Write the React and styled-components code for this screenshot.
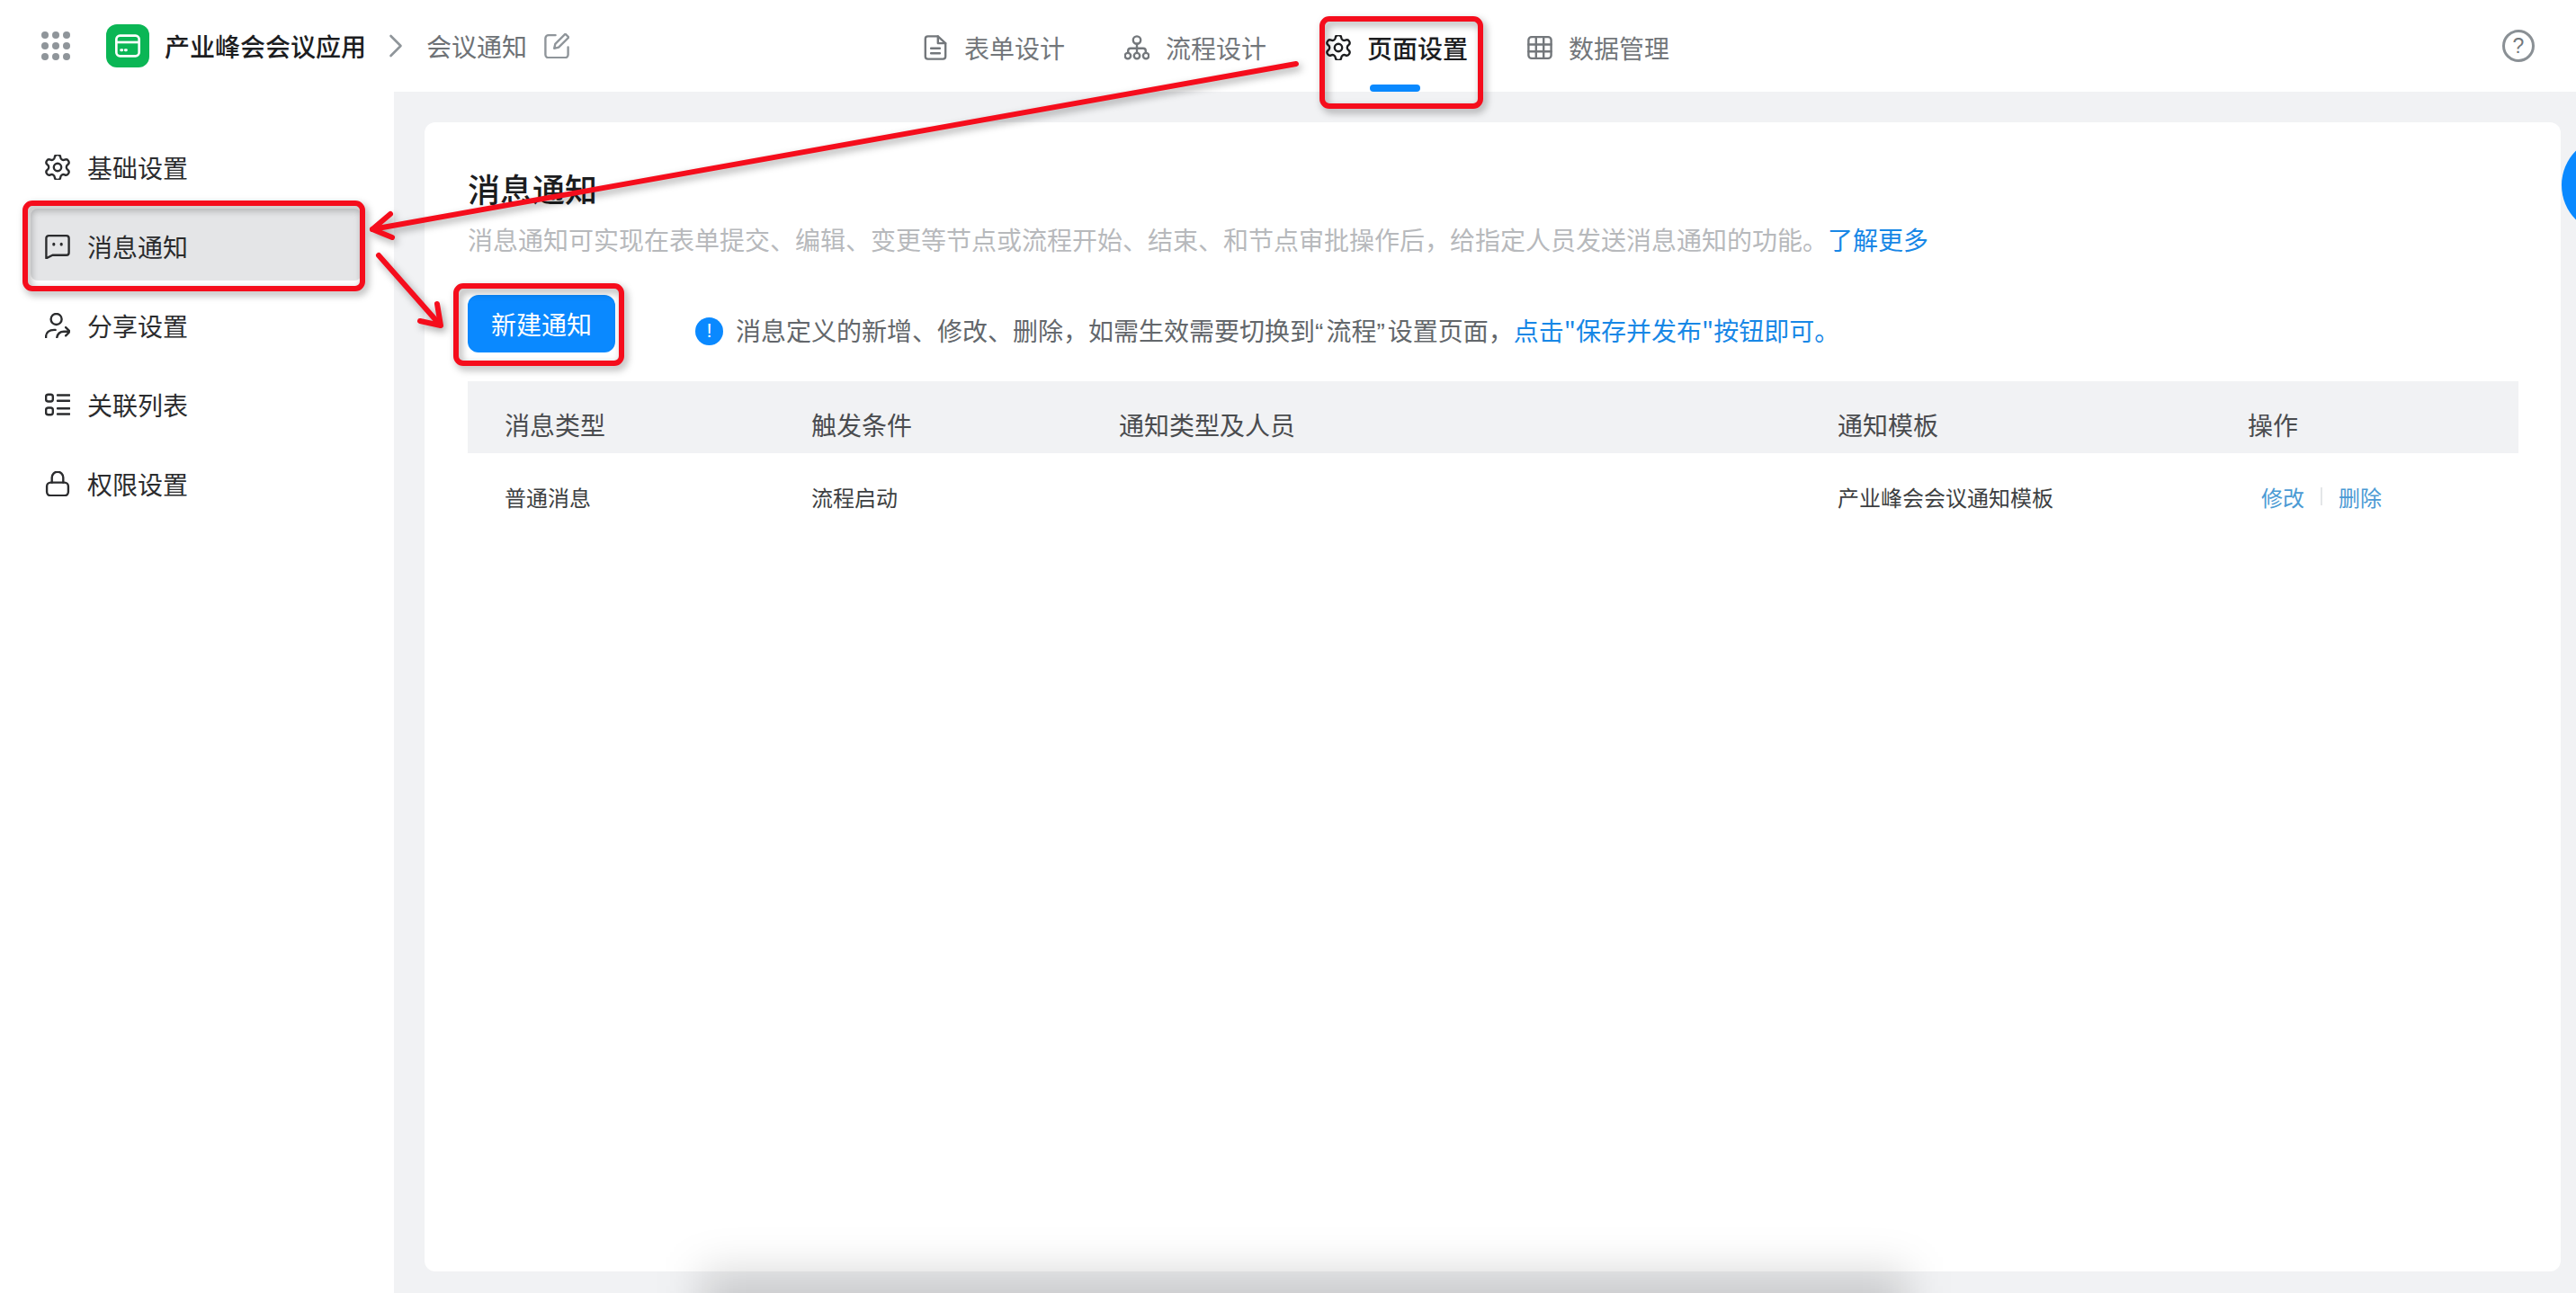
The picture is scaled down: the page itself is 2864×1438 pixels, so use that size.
import React from 'react';
import styled, {createGlobalStyle} from 'styled-components';

const GlobalStyle = createGlobalStyle`
  html, body {
    margin: 0;
    padding: 0;
    background: #fff;
    font-family: "Noto Sans CJK SC", "Noto Sans", sans-serif;
  }
`;

const COMMA = '\uFF0C';

const Icon = ({size = 28, color = 'currentColor', width = 1.7, children}) => (
  <svg width={size} height={size} viewBox="2 2 20 20" fill="none" stroke={color} strokeWidth={width} strokeLinecap="round" strokeLinejoin="round">
    {children}
  </svg>
);

const Gear = () => (
  <Icon>
    <path d="M9.671 4.136a2.34 2.34 0 0 1 4.659 0 2.34 2.34 0 0 0 3.319 1.915 2.34 2.34 0 0 1 2.33 4.033 2.34 2.34 0 0 0 0 3.831 2.34 2.34 0 0 1-2.33 4.033 2.34 2.34 0 0 0-3.319 1.915 2.34 2.34 0 0 1-4.659 0 2.34 2.34 0 0 0-3.32-1.915 2.34 2.34 0 0 1-2.33-4.033 2.34 2.34 0 0 0 0-3.831A2.34 2.34 0 0 1 6.35 6.051a2.34 2.34 0 0 0 3.319-1.915"/>
    <circle cx="12" cy="12" r="3"/>
  </Icon>
);

const Doc = () => (
  <Icon>
    <path d="M4 5a2 2 0 0 1 2-2h8l6 5.500V19a2 2 0 0 1-2 2H6a2 2 0 0 1-2-2z"/>
    <path d="M14 3v5.500h6M8.500 12.500h7M8.500 16.500h7"/>
  </Icon>
);

const Flow = () => (
  <Icon>
    <circle cx="12" cy="6" r="3"/>
    <path d="M12 9v3.500M5 16v-1.500a2 2 0 0 1 2-2h10a2 2 0 0 1 2 2V16M12 12.500V16"/>
    <circle cx="4.800" cy="18.500" r="2.300"/>
    <circle cx="12" cy="18.500" r="2.300"/>
    <circle cx="19.200" cy="18.500" r="2.300"/>
  </Icon>
);

const TableIcon = () => (
  <Icon>
    <rect x="3" y="3.500" width="18" height="17" rx="2.500"/>
    <path d="M3 9.500h18M3 15h18M9 3.500v17M15 3.500v17"/>
  </Icon>
);

const Chat = () => (
  <Icon>
    <path d="M3 5.500a2 2 0 0 1 2-2h14a2 2 0 0 1 2 2v11.500a2 2 0 0 1-2 2H8l-5 2.500z"/>
    <path d="M9 10v.5M15 10v.5" strokeWidth="2.200"/>
  </Icon>
);

const UserShare = () => (
  <Icon>
    <circle cx="11" cy="7" r="4.300"/>
    <path d="M2.800 21.500V21c0-3.500 2.500-5.500 6.500-5.500h1"/>
    <path d="M11.500 21.500c.5-3 2.500-4.700 5.500-4.700h4.500M18.500 13.500l3.300 3.300-3.300 3.300"/>
  </Icon>
);

const ListIcon = () => (
  <Icon>
    <rect x="2.800" y="4" width="5.500" height="5.500" rx="1.800"/>
    <rect x="2.800" y="14.500" width="5.500" height="5.500" rx="1.800"/>
    <path d="M12 4.500h9.500M12 9h9.500M12 15h9.500M12 19.500h9.500"/>
  </Icon>
);

const Lock = () => (
  <Icon>
    <rect x="3.500" y="11" width="17" height="10.500" rx="3"/>
    <path d="M7.500 11V7a4.500 4.500 0 0 1 9 0v4"/>
  </Icon>
);

const tabs = [
  {label: '表单设计', icon: <Doc/>},
  {label: '流程设计', icon: <Flow/>},
  {label: '页面设置', icon: <Gear/>, active: true},
  {label: '数据管理', icon: <TableIcon/>},
];

const menu = [
  {label: '基础设置', icon: <Gear/>},
  {label: '消息通知', icon: <Chat/>, active: true},
  {label: '分享设置', icon: <UserShare/>},
  {label: '关联列表', icon: <ListIcon/>},
  {label: '权限设置', icon: <Lock/>},
];

export default function App() {
  return (
    <Page>
      <GlobalStyle/>
      <Header>
        <Dots>
          {Array.from({length: 9}).map((_, i) => <Dot key={i}/>)}
        </Dots>
        <AppLogo>
          <svg width="32" height="32" viewBox="0 0 24 24" fill="none" stroke="#fff" strokeWidth="2" strokeLinejoin="round">
            <rect x="2.500" y="3.500" width="19" height="17" rx="3"/>
            <path d="M2.500 9h19"/>
            <path d="M6.500 15.500h.8M10 15.500h.8" strokeWidth="2.200" strokeLinecap="round"/>
          </svg>
        </AppLogo>
        <AppName>产业峰会会议应用</AppName>
        <Chevron>
          <svg width="16" height="26" viewBox="0 0 16 26" fill="none" stroke="#8f959a" strokeWidth="2.600" strokeLinecap="round" strokeLinejoin="round">
            <path d="M2.500 2l11 11-11 11"/>
          </svg>
        </Chevron>
        <PageName>会议通知</PageName>
        <EditIcon>
          <Icon color="#8f959a">
            <path d="M11 3.500H5.500A2.500 2.500 0 0 0 3 6v13a2.500 2.500 0 0 0 2.500 2.500h13A2.500 2.500 0 0 0 21 19v-6"/>
            <path d="M10 14l.8-3.500 8-8 2.700 2.700-8 8z"/>
          </Icon>
        </EditIcon>
        <Tabs>
          {tabs.map(t => (
            <Tab key={t.label} $active={t.active}>
              {t.icon}
              {t.label}
            </Tab>
          ))}
        </Tabs>
        <Help>?</Help>
      </Header>
      <Body>
        <Sidebar>
          {menu.map(m => (
            <MenuItem key={m.label} $active={m.active}>
              {m.icon}
              {m.label}
            </MenuItem>
          ))}
        </Sidebar>
        <Main>
          <Card>
            <Title>消息通知</Title>
            <Description>
              消息通知可实现在表单提交、编辑、变更等节点或流程开始、结束、和节点审批操作后{COMMA}给指定人员发送消息通知的功能。<TextLink>了解更多</TextLink>
            </Description>
            <Toolbar>
              <PrimaryButton>新建通知</PrimaryButton>
              <Notice>
                <NoticeIcon>!</NoticeIcon>
                <span>消息定义的新增、修改、删除{COMMA}如需生效需要切换到<Quote>“</Quote>流程<Quote>”</Quote>设置页面{COMMA}<TextLink>点击"保存并发布"按钮即可。</TextLink></span>
              </Notice>
            </Toolbar>
            <TableHead>
              <span>消息类型</span>
              <span>触发条件</span>
              <span>通知类型及人员</span>
              <span>通知模板</span>
              <span>操作</span>
            </TableHead>
            <TableRow>
              <span>普通消息</span>
              <span>流程启动</span>
              <span/>
              <span>产业峰会会议通知模板</span>
              <Actions>
                <ActionLink>修改</ActionLink>
                <ActionDivider/>
                <ActionLink>删除</ActionLink>
              </Actions>
            </TableRow>
          </Card>
        </Main>
      </Body>
      <FloatBall/>
      <BottomShadow/>
      <Annotations viewBox="0 0 2864 1438" fill="none" stroke="#f50d1c" strokeWidth="6" strokeLinecap="round" strokeLinejoin="round">
        <rect x="1470" y="21" width="176" height="97" rx="8"/>
        <rect x="28" y="226" width="375" height="95" rx="8"/>
        <rect x="507" y="318" width="184" height="86" rx="8"/>
        <path d="M1441 71L414 255"/>
        <path d="M434 238L414 255L436 264"/>
        <path d="M421 284L489 361"/>
        <path d="M486 338L490 362L467 357"/>
      </Annotations>
    </Page>
  );
}

const Page = styled.div`
  position: relative;
  width: 2864px;
  height: 1438px;
  overflow: hidden;
  display: flex;
  flex-direction: column;
  background: #fff;
`;

const Header = styled.header`
  flex: none;
  display: flex;
  align-items: center;
  height: 102px;
  padding: 0 46px;
  box-sizing: border-box;
  background: #fff;
`;

const Dots = styled.div`
  display: grid;
  grid-template-columns: repeat(3, 8px);
  grid-auto-rows: 8px;
  gap: 4px;
  margin-right: 40px;
`;

const Dot = styled.i`
  border-radius: 50%;
  background: #8f959a;
`;

const AppLogo = styled.div`
  display: flex;
  align-items: center;
  justify-content: center;
  width: 48px;
  height: 48px;
  border-radius: 12px;
  background: #0bb655;
`;

const AppName = styled.div`
  margin-left: 17px;
  font-size: 28px;
  font-weight: 500;
  color: #1c1d1f;
  white-space: nowrap;
`;

const Chevron = styled.div`
  display: flex;
  margin-left: 25px;
`;

const PageName = styled.div`
  margin-left: 26px;
  font-size: 28px;
  color: #6e7276;
  white-space: nowrap;
`;

const EditIcon = styled.div`
  display: flex;
  margin-left: 19px;
`;

const Tabs = styled.nav`
  display: flex;
  gap: 66px;
  margin-left: 393px;
`;

const Tab = styled.div`
  position: relative;
  display: flex;
  align-items: center;
  gap: 18px;
  height: 102px;
  padding-top: 3px;
  box-sizing: border-box;
  font-size: 28px;
  font-weight: ${p => (p.$active ? 500 : 400)};
  color: ${p => (p.$active ? '#1c1d1f' : '#73777b')};
  white-space: nowrap;

  ${p => p.$active && `
    &::after {
      content: '';
      position: absolute;
      left: 49px;
      bottom: 0;
      width: 56px;
      height: 8px;
      border-radius: 4px;
      background: #0a89ff;
    }
  `}
`;

const Help = styled.div`
  display: flex;
  align-items: center;
  justify-content: center;
  margin-left: auto;
  width: 36px;
  height: 36px;
  box-sizing: border-box;
  border: 3px solid #8a9095;
  border-radius: 50%;
  font-family: "Liberation Sans", sans-serif;
  font-size: 23px;
  color: #73787c;
`;

const Body = styled.div`
  flex: 1;
  display: flex;
  min-height: 0;
`;

const Sidebar = styled.aside`
  flex: none;
  display: flex;
  flex-direction: column;
  gap: 8px;
  width: 438px;
  padding: 42px 36px 0 34px;
  box-sizing: border-box;
  background: #fff;
`;

const MenuItem = styled.div`
  display: flex;
  align-items: center;
  gap: 19px;
  height: 80px;
  padding: 3px 0 0 16px;
  box-sizing: border-box;
  border-radius: 8px;
  font-size: 28px;
  color: #2b2c2e;
  background: ${p => (p.$active ? '#e4e5e7' : 'transparent')};
`;

const Main = styled.main`
  flex: 1;
  display: flex;
  padding: 34px 17px 24px 34px;
  background: #f1f2f4;
`;

const Card = styled.section`
  flex: 1;
  padding: 51px 47px 0 48px;
  border-radius: 12px;
  background: #fff;
`;

const Title = styled.h1`
  margin: 0;
  font-size: 36px;
  line-height: 44px;
  font-weight: 500;
  color: #1c1d1f;
`;

const Description = styled.p`
  margin: 15px 0 0;
  font-size: 28px;
  line-height: 40px;
  color: #b7b9bc;
  white-space: nowrap;
`;

const TextLink = styled.span`
  color: #1787e6;
`;

const Quote = styled.span`
  font-family: "Liberation Sans", sans-serif;
  letter-spacing: 3px;
`;

const Toolbar = styled.div`
  display: flex;
  align-items: center;
  margin-top: 42px;
`;

const PrimaryButton = styled.button`
  width: 164px;
  height: 64px;
  padding: 0;
  border: none;
  border-radius: 12px;
  font-family: inherit;
  font-size: 28px;
  color: #fff;
  background: #0a89ff;
`;

const Notice = styled.div`
  display: flex;
  align-items: center;
  gap: 14px;
  margin: 16px 0 0 89px;
  font-size: 28px;
  line-height: 40px;
  color: #63676b;
  white-space: nowrap;
`;

const NoticeIcon = styled.i`
  flex: none;
  display: flex;
  align-items: center;
  justify-content: center;
  width: 31px;
  height: 31px;
  border-radius: 50%;
  font-family: "Liberation Sans", sans-serif;
  font-style: normal;
  font-size: 22px;
  color: #fff;
  background: #0a89ff;
`;

const columns = `
  display: grid;
  grid-template-columns: 341px 342px 799px 456px 1fr;
  align-items: center;
  padding-left: 41px;
`;

const TableHead = styled.div`
  ${columns}
  height: 80px;
  margin-top: 32px;
  padding-top: 16px;
  box-sizing: border-box;
  font-size: 28px;
  color: #4a4c4f;
  background: #f1f2f4;
`;

const TableRow = styled.div`
  ${columns}
  height: 96px;
  font-size: 24px;
  color: #3d3f42;
`;

const Actions = styled.div`
  display: flex;
  align-items: center;
  padding-left: 15px;
`;

const ActionLink = styled.span`
  color: #4a9ad4;
`;

const ActionDivider = styled.i`
  width: 2px;
  height: 20px;
  margin: 0 18px 0 18px;
  background: #e4e6e8;
`;

const FloatBall = styled.div`
  position: absolute;
  left: 2848px;
  top: 152px;
  width: 108px;
  height: 108px;
  border-radius: 50%;
  background: #0a89ff;
`;

const BottomShadow = styled.div`
  position: absolute;
  left: 780px;
  bottom: -66px;
  width: 1340px;
  height: 90px;
  background: rgba(0, 0, 0, 0.16);
  filter: blur(24px);
`;

const Annotations = styled.svg`
  position: absolute;
  left: 0;
  top: 0;
  width: 2864px;
  height: 1438px;
  pointer-events: none;
  filter: drop-shadow(3px 4px 4px rgba(0, 0, 0, 0.35));
`;
